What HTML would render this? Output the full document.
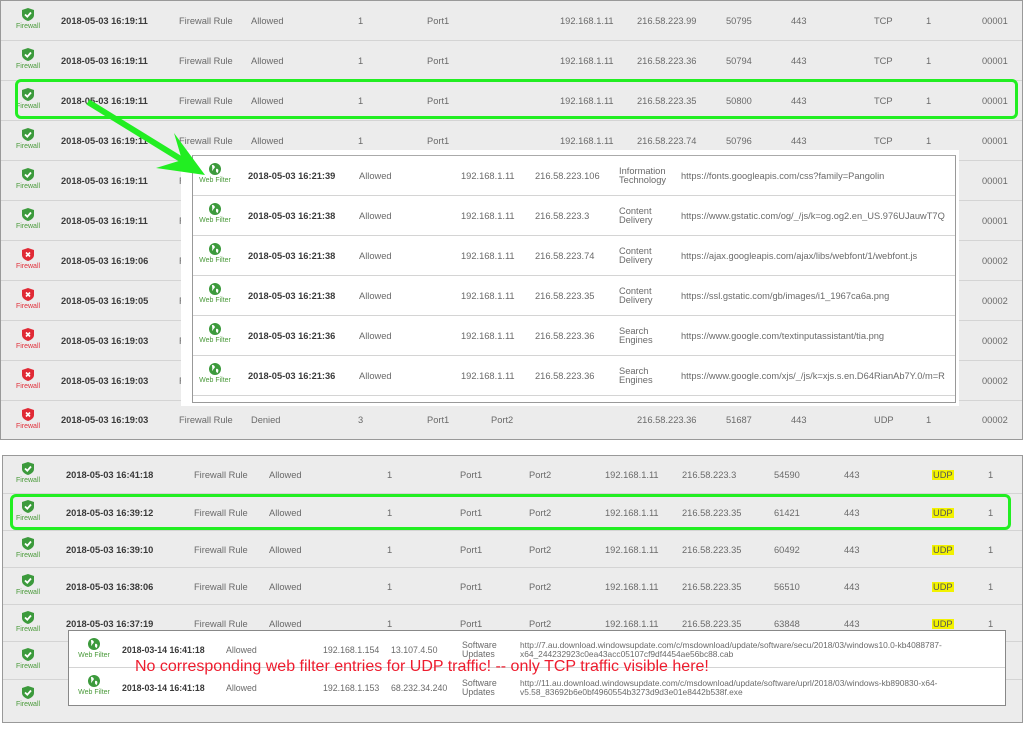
<!DOCTYPE html>
<html><head><meta charset="utf-8"><style>
*{margin:0;padding:0;box-sizing:border-box}
body{width:1024px;height:730px;background:#fff;position:relative;overflow:hidden;font-family:"Liberation Sans",sans-serif}
.pan{position:absolute;border:1px solid #999;background:#ececec;overflow:hidden}
.r{position:absolute;left:0;right:0;border-bottom:1px solid #d4d4d4}
.r span{position:absolute;font-size:9.3px;color:#6a6a6a;white-space:nowrap}
.r span.d{color:#3a3a3a;font-weight:bold}
.ic{position:absolute;width:40px;text-align:center;font-size:7px;line-height:8px;white-space:nowrap}
.ic svg{display:block;margin:0 auto 2px}
.g{color:#4a9a3a}.rd{color:#e0303a}
.ov{position:absolute;background:#fff;border:1px solid #999}
.two{line-height:9px}
.u{background:#f2f200;color:#555 !important;padding:0 1px}
</style></head><body>

<!-- TOP PANEL -->
<div class="pan" style="left:0;top:0;width:1023px;height:440px">
</div>
<div style="position:absolute;left:1px;top:1px;width:1021px;height:438px">
<div class="r" style="top:0;height:40px">
 <div class="ic g" style="left:7px;top:7px"><svg width="12" height="13" viewBox="0 0 12 13"><path d="M6 0L12 2V7C12 10 9 12 6 13C3 12 0 10 0 7V2Z" fill="#3c9a3c"/><path d="M3 6.5L5.3 8.7L9 4.5" stroke="#fff" stroke-width="1.8" fill="none"/></svg>Firewall</div>
 <span class="d" style="left:60px;top:15px">2018-05-03 16:19:11</span><span style="left:178px;top:15px">Firewall Rule</span><span style="left:250px;top:15px">Allowed</span><span style="left:357px;top:15px">1</span><span style="left:426px;top:15px">Port1</span><span style="left:559px;top:15px">192.168.1.11</span><span style="left:636px;top:15px">216.58.223.99</span><span style="left:725px;top:15px">50795</span><span style="left:790px;top:15px">443</span><span style="left:873px;top:15px">TCP</span><span style="left:925px;top:15px">1</span><span style="left:981px;top:15px">00001</span></div>
<div class="r" style="top:40px;height:40px">
 <div class="ic g" style="left:7px;top:7px"><svg width="12" height="13" viewBox="0 0 12 13"><path d="M6 0L12 2V7C12 10 9 12 6 13C3 12 0 10 0 7V2Z" fill="#3c9a3c"/><path d="M3 6.5L5.3 8.7L9 4.5" stroke="#fff" stroke-width="1.8" fill="none"/></svg>Firewall</div>
 <span class="d" style="left:60px;top:15px">2018-05-03 16:19:11</span><span style="left:178px;top:15px">Firewall Rule</span><span style="left:250px;top:15px">Allowed</span><span style="left:357px;top:15px">1</span><span style="left:426px;top:15px">Port1</span><span style="left:559px;top:15px">192.168.1.11</span><span style="left:636px;top:15px">216.58.223.36</span><span style="left:725px;top:15px">50794</span><span style="left:790px;top:15px">443</span><span style="left:873px;top:15px">TCP</span><span style="left:925px;top:15px">1</span><span style="left:981px;top:15px">00001</span></div>
<div class="r" style="top:80px;height:40px">
 <div class="ic g" style="left:7px;top:7px"><svg width="12" height="13" viewBox="0 0 12 13"><path d="M6 0L12 2V7C12 10 9 12 6 13C3 12 0 10 0 7V2Z" fill="#3c9a3c"/><path d="M3 6.5L5.3 8.7L9 4.5" stroke="#fff" stroke-width="1.8" fill="none"/></svg>Firewall</div>
 <span class="d" style="left:60px;top:15px">2018-05-03 16:19:11</span><span style="left:178px;top:15px">Firewall Rule</span><span style="left:250px;top:15px">Allowed</span><span style="left:357px;top:15px">1</span><span style="left:426px;top:15px">Port1</span><span style="left:559px;top:15px">192.168.1.11</span><span style="left:636px;top:15px">216.58.223.35</span><span style="left:725px;top:15px">50800</span><span style="left:790px;top:15px">443</span><span style="left:873px;top:15px">TCP</span><span style="left:925px;top:15px">1</span><span style="left:981px;top:15px">00001</span></div>
<div class="r" style="top:120px;height:40px">
 <div class="ic g" style="left:7px;top:7px"><svg width="12" height="13" viewBox="0 0 12 13"><path d="M6 0L12 2V7C12 10 9 12 6 13C3 12 0 10 0 7V2Z" fill="#3c9a3c"/><path d="M3 6.5L5.3 8.7L9 4.5" stroke="#fff" stroke-width="1.8" fill="none"/></svg>Firewall</div>
 <span class="d" style="left:60px;top:15px">2018-05-03 16:19:11</span><span style="left:178px;top:15px">Firewall Rule</span><span style="left:250px;top:15px">Allowed</span><span style="left:357px;top:15px">1</span><span style="left:426px;top:15px">Port1</span><span style="left:559px;top:15px">192.168.1.11</span><span style="left:636px;top:15px">216.58.223.74</span><span style="left:725px;top:15px">50796</span><span style="left:790px;top:15px">443</span><span style="left:873px;top:15px">TCP</span><span style="left:925px;top:15px">1</span><span style="left:981px;top:15px">00001</span></div>
<div class="r" style="top:160px;height:40px">
 <div class="ic g" style="left:7px;top:7px"><svg width="12" height="13" viewBox="0 0 12 13"><path d="M6 0L12 2V7C12 10 9 12 6 13C3 12 0 10 0 7V2Z" fill="#3c9a3c"/><path d="M3 6.5L5.3 8.7L9 4.5" stroke="#fff" stroke-width="1.8" fill="none"/></svg>Firewall</div>
 <span class="d" style="left:60px;top:15px">2018-05-03 16:19:11</span><span style="left:178px;top:15px">Firewall Rule</span><span style="left:981px;top:15px">00001</span></div>
<div class="r" style="top:200px;height:40px">
 <div class="ic g" style="left:7px;top:7px"><svg width="12" height="13" viewBox="0 0 12 13"><path d="M6 0L12 2V7C12 10 9 12 6 13C3 12 0 10 0 7V2Z" fill="#3c9a3c"/><path d="M3 6.5L5.3 8.7L9 4.5" stroke="#fff" stroke-width="1.8" fill="none"/></svg>Firewall</div>
 <span class="d" style="left:60px;top:15px">2018-05-03 16:19:11</span><span style="left:178px;top:15px">Firewall Rule</span><span style="left:981px;top:15px">00001</span></div>
<div class="r" style="top:240px;height:40px">
 <div class="ic rd" style="left:7px;top:7px"><svg width="12" height="13" viewBox="0 0 12 13"><path d="M6 0L12 2V7C12 10 9 12 6 13C3 12 0 10 0 7V2Z" fill="#e02a35"/><path d="M4 4.5L8 8.5M8 4.5L4 8.5" stroke="#fff" stroke-width="1.6"/></svg>Firewall</div>
 <span class="d" style="left:60px;top:15px">2018-05-03 16:19:06</span><span style="left:178px;top:15px">Firewall Rule</span><span style="left:981px;top:15px">00002</span></div>
<div class="r" style="top:280px;height:40px">
 <div class="ic rd" style="left:7px;top:7px"><svg width="12" height="13" viewBox="0 0 12 13"><path d="M6 0L12 2V7C12 10 9 12 6 13C3 12 0 10 0 7V2Z" fill="#e02a35"/><path d="M4 4.5L8 8.5M8 4.5L4 8.5" stroke="#fff" stroke-width="1.6"/></svg>Firewall</div>
 <span class="d" style="left:60px;top:15px">2018-05-03 16:19:05</span><span style="left:178px;top:15px">Firewall Rule</span><span style="left:981px;top:15px">00002</span></div>
<div class="r" style="top:320px;height:40px">
 <div class="ic rd" style="left:7px;top:7px"><svg width="12" height="13" viewBox="0 0 12 13"><path d="M6 0L12 2V7C12 10 9 12 6 13C3 12 0 10 0 7V2Z" fill="#e02a35"/><path d="M4 4.5L8 8.5M8 4.5L4 8.5" stroke="#fff" stroke-width="1.6"/></svg>Firewall</div>
 <span class="d" style="left:60px;top:15px">2018-05-03 16:19:03</span><span style="left:178px;top:15px">Firewall Rule</span><span style="left:981px;top:15px">00002</span></div>
<div class="r" style="top:360px;height:40px">
 <div class="ic rd" style="left:7px;top:7px"><svg width="12" height="13" viewBox="0 0 12 13"><path d="M6 0L12 2V7C12 10 9 12 6 13C3 12 0 10 0 7V2Z" fill="#e02a35"/><path d="M4 4.5L8 8.5M8 4.5L4 8.5" stroke="#fff" stroke-width="1.6"/></svg>Firewall</div>
 <span class="d" style="left:60px;top:15px">2018-05-03 16:19:03</span><span style="left:178px;top:15px">Firewall Rule</span><span style="left:981px;top:15px">00002</span></div>
<div class="r" style="top:400px;height:38px;border:none">
 <div class="ic rd" style="left:7px;top:7px"><svg width="12" height="13" viewBox="0 0 12 13"><path d="M6 0L12 2V7C12 10 9 12 6 13C3 12 0 10 0 7V2Z" fill="#e02a35"/><path d="M4 4.5L8 8.5M8 4.5L4 8.5" stroke="#fff" stroke-width="1.6"/></svg>Firewall</div>
 <span class="d" style="left:60px;top:14px">2018-05-03 16:19:03</span><span style="left:178px;top:14px">Firewall Rule</span><span style="left:250px;top:14px">Denied</span><span style="left:357px;top:14px">3</span><span style="left:426px;top:14px">Port1</span><span style="left:490px;top:14px">Port2</span><span style="left:636px;top:14px">216.58.223.36</span><span style="left:725px;top:14px">51687</span><span style="left:790px;top:14px">443</span><span style="left:873px;top:14px">UDP</span><span style="left:925px;top:14px">1</span><span style="left:981px;top:14px">00002</span></div>
</div>

<!-- TOP OVERLAY -->
<div style="position:absolute;left:181px;top:150px;width:778px;height:256px;background:#fff"></div>
<div class="ov" style="left:192px;top:155px;width:764px;height:248px;border-top:1px solid #aaa">
<div class="r" style="top:0;height:40px">
 <div class="ic g" style="left:2px;top:7px"><svg width="12" height="12" viewBox="0 0 12 12"><circle cx="6" cy="6" r="6" fill="#3c9a3c"/><path d="M3 2.5C5 2 6 4 5 5C4 6 3.5 6 3.5 7.5M7.5 6C9 6 9.5 7.5 8.5 9.5C7.5 9 7 8 7.5 6" fill="#fff" stroke="#fff" stroke-width=".8"/></svg>Web Filter</div>
 <span class="d" style="left:55px;top:15px">2018-05-03 16:21:39</span><span style="left:166px;top:15px">Allowed</span><span style="left:268px;top:15px">192.168.1.11</span><span style="left:342px;top:15px">216.58.223.106</span><span class="two" style="left:426px;top:11px">Information<br>Technology</span><span style="left:488px;top:15px">https://fonts.googleapis.com/css?family=Pangolin</span></div>
<div class="r" style="top:40px;height:40px">
 <div class="ic g" style="left:2px;top:7px"><svg width="12" height="12" viewBox="0 0 12 12"><circle cx="6" cy="6" r="6" fill="#3c9a3c"/><path d="M3 2.5C5 2 6 4 5 5C4 6 3.5 6 3.5 7.5M7.5 6C9 6 9.5 7.5 8.5 9.5C7.5 9 7 8 7.5 6" fill="#fff" stroke="#fff" stroke-width=".8"/></svg>Web Filter</div>
 <span class="d" style="left:55px;top:15px">2018-05-03 16:21:38</span><span style="left:166px;top:15px">Allowed</span><span style="left:268px;top:15px">192.168.1.11</span><span style="left:342px;top:15px">216.58.223.3</span><span class="two" style="left:426px;top:11px">Content<br>Delivery</span><span style="left:488px;top:15px;width:275px;overflow:hidden">https://www.gstatic.com/og/_/js/k=og.og2.en_US.976UJauwT7Q</span></div>
<div class="r" style="top:80px;height:40px">
 <div class="ic g" style="left:2px;top:7px"><svg width="12" height="12" viewBox="0 0 12 12"><circle cx="6" cy="6" r="6" fill="#3c9a3c"/><path d="M3 2.5C5 2 6 4 5 5C4 6 3.5 6 3.5 7.5M7.5 6C9 6 9.5 7.5 8.5 9.5C7.5 9 7 8 7.5 6" fill="#fff" stroke="#fff" stroke-width=".8"/></svg>Web Filter</div>
 <span class="d" style="left:55px;top:15px">2018-05-03 16:21:38</span><span style="left:166px;top:15px">Allowed</span><span style="left:268px;top:15px">192.168.1.11</span><span style="left:342px;top:15px">216.58.223.74</span><span class="two" style="left:426px;top:11px">Content<br>Delivery</span><span style="left:488px;top:15px">https://ajax.googleapis.com/ajax/libs/webfont/1/webfont.js</span></div>
<div class="r" style="top:120px;height:40px">
 <div class="ic g" style="left:2px;top:7px"><svg width="12" height="12" viewBox="0 0 12 12"><circle cx="6" cy="6" r="6" fill="#3c9a3c"/><path d="M3 2.5C5 2 6 4 5 5C4 6 3.5 6 3.5 7.5M7.5 6C9 6 9.5 7.5 8.5 9.5C7.5 9 7 8 7.5 6" fill="#fff" stroke="#fff" stroke-width=".8"/></svg>Web Filter</div>
 <span class="d" style="left:55px;top:15px">2018-05-03 16:21:38</span><span style="left:166px;top:15px">Allowed</span><span style="left:268px;top:15px">192.168.1.11</span><span style="left:342px;top:15px">216.58.223.35</span><span class="two" style="left:426px;top:11px">Content<br>Delivery</span><span style="left:488px;top:15px">https://ssl.gstatic.com/gb/images/i1_1967ca6a.png</span></div>
<div class="r" style="top:160px;height:40px">
 <div class="ic g" style="left:2px;top:7px"><svg width="12" height="12" viewBox="0 0 12 12"><circle cx="6" cy="6" r="6" fill="#3c9a3c"/><path d="M3 2.5C5 2 6 4 5 5C4 6 3.5 6 3.5 7.5M7.5 6C9 6 9.5 7.5 8.5 9.5C7.5 9 7 8 7.5 6" fill="#fff" stroke="#fff" stroke-width=".8"/></svg>Web Filter</div>
 <span class="d" style="left:55px;top:15px">2018-05-03 16:21:36</span><span style="left:166px;top:15px">Allowed</span><span style="left:268px;top:15px">192.168.1.11</span><span style="left:342px;top:15px">216.58.223.36</span><span class="two" style="left:426px;top:11px">Search<br>Engines</span><span style="left:488px;top:15px">https://www.google.com/textinputassistant/tia.png</span></div>
<div class="r" style="top:200px;height:40px">
 <div class="ic g" style="left:2px;top:7px"><svg width="12" height="12" viewBox="0 0 12 12"><circle cx="6" cy="6" r="6" fill="#3c9a3c"/><path d="M3 2.5C5 2 6 4 5 5C4 6 3.5 6 3.5 7.5M7.5 6C9 6 9.5 7.5 8.5 9.5C7.5 9 7 8 7.5 6" fill="#fff" stroke="#fff" stroke-width=".8"/></svg>Web Filter</div>
 <span class="d" style="left:55px;top:15px">2018-05-03 16:21:36</span><span style="left:166px;top:15px">Allowed</span><span style="left:268px;top:15px">192.168.1.11</span><span style="left:342px;top:15px">216.58.223.36</span><span class="two" style="left:426px;top:11px">Search<br>Engines</span><span style="left:488px;top:15px;width:275px;overflow:hidden">https://www.google.com/xjs/_/js/k=xjs.s.en.D64RianAb7Y.0/m=R</span></div>
</div>

<!-- green highlight + arrow -->
<div style="position:absolute;left:15px;top:79px;width:1003px;height:40px;border:3px solid #22ee22;border-radius:6px"></div>
<svg style="position:absolute;left:0;top:0" width="1024" height="730">
 <path d="M88 102L192 166" stroke="#22ee22" stroke-width="6"/>
 <path d="M205 175L156 168L182 160L174 133Z" fill="#22ee22"/>
 <path d="M50 538L120 634" stroke="#e82020" stroke-width="2"/>
 <path d="M124 639L111 630M124 639L121 625" stroke="#e82020" stroke-width="2"/>
</svg>

<!-- BOTTOM PANEL -->
<div class="pan" style="left:2px;top:455px;width:1021px;height:268px">
<div class="r" style="top:0;height:38px">
 <div class="ic g" style="left:5px;top:6px"><svg width="12" height="13" viewBox="0 0 12 13"><path d="M6 0L12 2V7C12 10 9 12 6 13C3 12 0 10 0 7V2Z" fill="#3c9a3c"/><path d="M3 6.5L5.3 8.7L9 4.5" stroke="#fff" stroke-width="1.8" fill="none"/></svg>Firewall</div>
 <span class="d" style="left:63px;top:14px">2018-05-03 16:41:18</span><span style="left:191px;top:14px">Firewall Rule</span><span style="left:266px;top:14px">Allowed</span><span style="left:384px;top:14px">1</span><span style="left:457px;top:14px">Port1</span><span style="left:526px;top:14px">Port2</span><span style="left:602px;top:14px">192.168.1.11</span><span style="left:679px;top:14px">216.58.223.3</span><span style="left:771px;top:14px">54590</span><span style="left:841px;top:14px">443</span><span class="u" style="left:929px;top:14px">UDP</span><span style="left:985px;top:14px">1</span></div>
<div class="r" style="top:38px;height:37px">
 <div class="ic g" style="left:5px;top:6px"><svg width="12" height="13" viewBox="0 0 12 13"><path d="M6 0L12 2V7C12 10 9 12 6 13C3 12 0 10 0 7V2Z" fill="#3c9a3c"/><path d="M3 6.5L5.3 8.7L9 4.5" stroke="#fff" stroke-width="1.8" fill="none"/></svg>Firewall</div>
 <span class="d" style="left:63px;top:14px">2018-05-03 16:39:12</span><span style="left:191px;top:14px">Firewall Rule</span><span style="left:266px;top:14px">Allowed</span><span style="left:384px;top:14px">1</span><span style="left:457px;top:14px">Port1</span><span style="left:526px;top:14px">Port2</span><span style="left:602px;top:14px">192.168.1.11</span><span style="left:679px;top:14px">216.58.223.35</span><span style="left:771px;top:14px">61421</span><span style="left:841px;top:14px">443</span><span class="u" style="left:929px;top:14px">UDP</span><span style="left:985px;top:14px">1</span></div>
<div class="r" style="top:75px;height:37px">
 <div class="ic g" style="left:5px;top:6px"><svg width="12" height="13" viewBox="0 0 12 13"><path d="M6 0L12 2V7C12 10 9 12 6 13C3 12 0 10 0 7V2Z" fill="#3c9a3c"/><path d="M3 6.5L5.3 8.7L9 4.5" stroke="#fff" stroke-width="1.8" fill="none"/></svg>Firewall</div>
 <span class="d" style="left:63px;top:14px">2018-05-03 16:39:10</span><span style="left:191px;top:14px">Firewall Rule</span><span style="left:266px;top:14px">Allowed</span><span style="left:384px;top:14px">1</span><span style="left:457px;top:14px">Port1</span><span style="left:526px;top:14px">Port2</span><span style="left:602px;top:14px">192.168.1.11</span><span style="left:679px;top:14px">216.58.223.35</span><span style="left:771px;top:14px">60492</span><span style="left:841px;top:14px">443</span><span class="u" style="left:929px;top:14px">UDP</span><span style="left:985px;top:14px">1</span></div>
<div class="r" style="top:112px;height:37px">
 <div class="ic g" style="left:5px;top:6px"><svg width="12" height="13" viewBox="0 0 12 13"><path d="M6 0L12 2V7C12 10 9 12 6 13C3 12 0 10 0 7V2Z" fill="#3c9a3c"/><path d="M3 6.5L5.3 8.7L9 4.5" stroke="#fff" stroke-width="1.8" fill="none"/></svg>Firewall</div>
 <span class="d" style="left:63px;top:14px">2018-05-03 16:38:06</span><span style="left:191px;top:14px">Firewall Rule</span><span style="left:266px;top:14px">Allowed</span><span style="left:384px;top:14px">1</span><span style="left:457px;top:14px">Port1</span><span style="left:526px;top:14px">Port2</span><span style="left:602px;top:14px">192.168.1.11</span><span style="left:679px;top:14px">216.58.223.35</span><span style="left:771px;top:14px">56510</span><span style="left:841px;top:14px">443</span><span class="u" style="left:929px;top:14px">UDP</span><span style="left:985px;top:14px">1</span></div>
<div class="r" style="top:149px;height:37px">
 <div class="ic g" style="left:5px;top:6px"><svg width="12" height="13" viewBox="0 0 12 13"><path d="M6 0L12 2V7C12 10 9 12 6 13C3 12 0 10 0 7V2Z" fill="#3c9a3c"/><path d="M3 6.5L5.3 8.7L9 4.5" stroke="#fff" stroke-width="1.8" fill="none"/></svg>Firewall</div>
 <span class="d" style="left:63px;top:14px">2018-05-03 16:37:19</span><span style="left:191px;top:14px">Firewall Rule</span><span style="left:266px;top:14px">Allowed</span><span style="left:384px;top:14px">1</span><span style="left:457px;top:14px">Port1</span><span style="left:526px;top:14px">Port2</span><span style="left:602px;top:14px">192.168.1.11</span><span style="left:679px;top:14px">216.58.223.35</span><span style="left:771px;top:14px">63848</span><span style="left:841px;top:14px">443</span><span class="u" style="left:929px;top:14px">UDP</span><span style="left:985px;top:14px">1</span></div>
<div class="r" style="top:186px;height:38px">
 <div class="ic g" style="left:5px;top:6px"><svg width="12" height="13" viewBox="0 0 12 13"><path d="M6 0L12 2V7C12 10 9 12 6 13C3 12 0 10 0 7V2Z" fill="#3c9a3c"/><path d="M3 6.5L5.3 8.7L9 4.5" stroke="#fff" stroke-width="1.8" fill="none"/></svg>Firewall</div></div>
<div class="r" style="top:224px;height:44px;border:none">
 <div class="ic g" style="left:5px;top:6px"><svg width="12" height="13" viewBox="0 0 12 13"><path d="M6 0L12 2V7C12 10 9 12 6 13C3 12 0 10 0 7V2Z" fill="#3c9a3c"/><path d="M3 6.5L5.3 8.7L9 4.5" stroke="#fff" stroke-width="1.8" fill="none"/></svg>Firewall</div></div>
</div>

<div style="position:absolute;left:10px;top:494px;width:1001px;height:36px;border:3px solid #22ee22;border-radius:6px"></div>

<!-- BOTTOM OVERLAY -->
<div class="ov" style="left:68px;top:630px;width:938px;height:76px;border-color:#888">
<div class="r" style="top:0;height:37px">
 <div class="ic g" style="left:5px;top:7px"><svg width="12" height="12" viewBox="0 0 12 12"><circle cx="6" cy="6" r="6" fill="#3c9a3c"/><path d="M3 2.5C5 2 6 4 5 5C4 6 3.5 6 3.5 7.5M7.5 6C9 6 9.5 7.5 8.5 9.5C7.5 9 7 8 7.5 6" fill="#fff" stroke="#fff" stroke-width=".8"/></svg>Web Filter</div>
 <span class="d" style="left:53px;top:14px;font-size:8.8px">2018-03-14 16:41:18</span><span style="left:157px;top:14px;font-size:8.8px">Allowed</span><span style="left:254px;top:14px;font-size:8.8px">192.168.1.154</span><span style="left:322px;top:14px;font-size:8.8px">13.107.4.50</span><span class="two" style="left:393px;top:10px;font-size:8.8px">Software<br>Updates</span><span class="two" style="left:451px;top:10px;font-size:8.4px">http://7.au.download.windowsupdate.com/c/msdownload/update/software/secu/2018/03/windows10.0-kb4088787-<br>x64_244232923c0ea43acc05107cf9df4454ae56bc88.cab</span></div>
<div class="r" style="top:37px;height:39px;border:none">
 <div class="ic g" style="left:5px;top:7px"><svg width="12" height="12" viewBox="0 0 12 12"><circle cx="6" cy="6" r="6" fill="#3c9a3c"/><path d="M3 2.5C5 2 6 4 5 5C4 6 3.5 6 3.5 7.5M7.5 6C9 6 9.5 7.5 8.5 9.5C7.5 9 7 8 7.5 6" fill="#fff" stroke="#fff" stroke-width=".8"/></svg>Web Filter</div>
 <span class="d" style="left:53px;top:15px;font-size:8.8px">2018-03-14 16:41:18</span><span style="left:157px;top:15px;font-size:8.8px">Allowed</span><span style="left:254px;top:15px;font-size:8.8px">192.168.1.153</span><span style="left:322px;top:15px;font-size:8.8px">68.232.34.240</span><span class="two" style="left:393px;top:11px;font-size:8.8px">Software<br>Updates</span><span class="two" style="left:451px;top:11px;font-size:8.4px">http://11.au.download.windowsupdate.com/c/msdownload/update/software/uprl/2018/03/windows-kb890830-x64-<br>v5.58_83692b6e0bf4960554b3273d9d3e01e8442b538f.exe</span></div>
</div>

<div style="position:absolute;left:135px;top:658px;font-size:16px;color:#ee1c2e;white-space:nowrap;font-family:'Liberation Sans',sans-serif">No corresponding web filter entries for UDP traffic! -- only TCP traffic visible here!</div>

</body></html>
